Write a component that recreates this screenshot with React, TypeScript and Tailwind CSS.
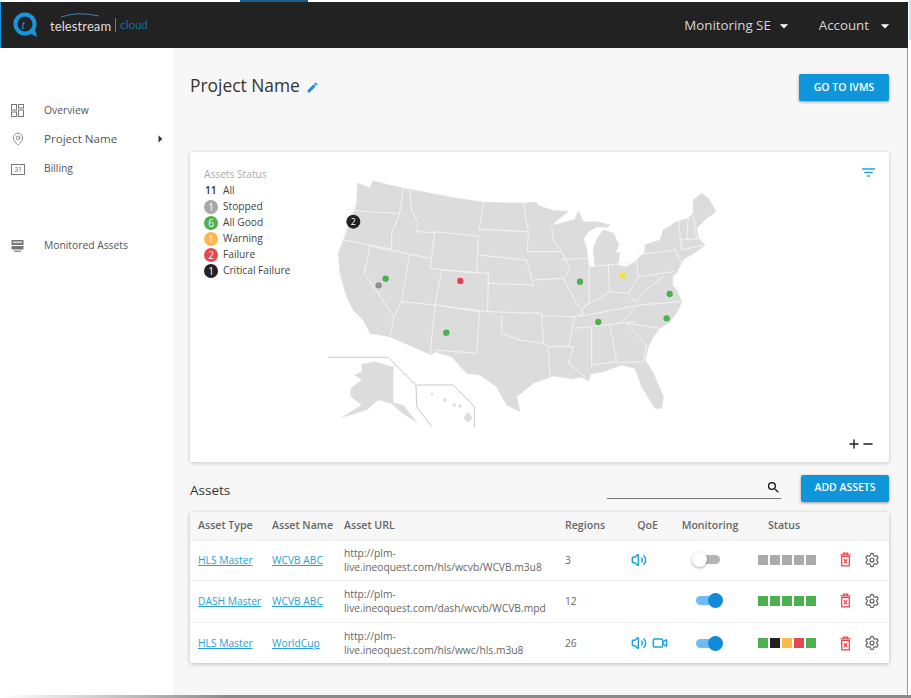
import { MdEdit, MdFilterList, MdSearch, MdArrowRight, MdArrowDropDown } from "react-icons/md";
import { Settings, Volume2, Video, MapPin, Plus, Minus } from "lucide-react";

const OUTLINE =
  "M113 40 L135 48 L150 55 L158 33 L250 55 L400 83 L490 97 L610 100 L650 97 L653 106 L700 122 L745 124 L715 148 L695 167 L740 155 L765 148 L775 124 L790 156 L830 155 L870 165 L862 172 L830 170 L805 185 L790 207 L800 235 L803 265 L808 288 L825 292 L823 268 L820 235 L832 205 L850 180 L880 190 L897 225 L885 250 L900 246 L895 280 L890 286 L920 290 L945 275 L975 245 L975 225 L1020 210 L1030 180 L1070 155 L1105 145 L1120 130 L1120 90 L1145 70 L1165 85 L1188 125 L1160 145 L1130 175 L1135 205 L1155 225 L1130 245 L1090 268 L1078 292 L1070 308 L1058 318 L1058 345 L1072 365 L1085 395 L1075 420 L1050 455 L1020 475 L1000 500 L985 530 L975 570 L1000 610 L1030 680 L1025 715 L1005 715 L965 650 L945 595 L905 585 L850 605 L812 612 L806 632 L785 622 L760 626 L700 618 L640 640 L590 680 L600 725 L560 705 L530 650 L480 615 L440 610 L395 560 L345 545 L335 555 L210 500 L150 490 L130 450 L100 420 L78 375 L60 310 L55 250 L72 205 L85 170 L110 100 Z";

const STATE_LINES = [
  "M85 118 L140 125 L240 130",
  "M250 58 L238 135 L215 190 L215 237",
  "M70 210 L215 237",
  "M150 228 L133 310 L222 440 L210 497",
  "M150 228 L330 265",
  "M268 255 L245 395 L222 440",
  "M270 60 L275 120 L295 160 L290 185 L345 188",
  "M345 185 L475 198 L470 310 L330 295 L345 185",
  "M490 97 L478 178",
  "M365 300 L505 310 L503 425 L345 405",
  "M365 300 L345 405 L330 555",
  "M245 395 L345 405 L478 425 L470 550 L345 540",
  "M478 178 L622 185",
  "M475 255 L620 270 L640 345 L505 340 L505 310",
  "M610 100 L625 185 L622 245 L725 245 L750 300 L730 325 L640 330",
  "M695 170 L700 210 L725 245",
  "M725 268 L805 265 L808 290 L808 395 L785 420",
  "M730 325 L770 400 L790 430 L765 440 L665 437",
  "M503 425 L665 430 L670 520 L600 510 L545 490 L545 435",
  "M670 520 L685 530 L690 620",
  "M685 530 L760 530 L745 580 L800 625",
  "M765 440 L745 530",
  "M808 290 L865 285 L868 365",
  "M865 285 L945 275",
  "M950 270 L955 320 L925 370 L870 365 L830 390 L790 410",
  "M775 440 L960 405 L1080 395",
  "M765 475 L945 455",
  "M950 410 L900 460",
  "M925 370 L945 395 L990 350 L1030 320",
  "M955 320 L1060 305",
  "M950 255 L1065 240 L1085 280",
  "M815 470 L815 590",
  "M870 465 L890 575 L815 585",
  "M920 460 L980 525 L970 575 L890 578",
  "M920 460 L1020 475",
  "M1075 150 L1085 240",
  "M1105 145 L1100 210",
  "M1120 135 L1130 208",
  "M1085 210 L1135 205",
  "M1085 240 L1150 225",
];

const MAP_DOTS = [
  { x: 197, y: 326, fill: "#4caf50" },
  { x: 176, y: 346, fill: "#8f8f8f" },
  { x: 421, y: 333, fill: "#e0404a" },
  { x: 379, y: 488, fill: "#4caf50" },
  { x: 780, y: 335, fill: "#4caf50" },
  { x: 909, y: 316, fill: "#f2e13c" },
  { x: 1049, y: 372, fill: "#4caf50" },
  { x: 1040, y: 445, fill: "#4caf50" },
  { x: 835, y: 456, fill: "#4caf50" },
];

const LEGEND = [
  { count: "1", label: "Stopped", color: "bg-[#a8a8a8]" },
  { count: "6", label: "All Good", color: "bg-[#4caf50]" },
  { count: "1", label: "Warning", color: "bg-[#ffb74d]" },
  { count: "2", label: "Failure", color: "bg-[#e5484d]" },
  { count: "1", label: "Critical Failure", color: "bg-[#222222]" },
];

const GRAY = "bg-[#aaaaaa]";
const GREEN = "bg-[#4caf50]";

const ASSETS = [
  {
    type: "HLS Master",
    name: "WCVB ABC",
    url: "live.ineoquest.com/hls/wcvb/WCVB.m3u8",
    regions: "3",
    audio: true,
    video: false,
    on: false,
    height: "h-[40px] pb-[2px]",
    status: [GRAY, GRAY, GRAY, GRAY, GRAY],
  },
  {
    type: "DASH Master",
    name: "WCVB ABC",
    url: "live.ineoquest.com/dash/wcvb/WCVB.mpd",
    regions: "12",
    audio: false,
    video: false,
    on: true,
    height: "h-[42px] pb-[2px]",
    status: [GREEN, GREEN, GREEN, GREEN, GREEN],
  },
  {
    type: "HLS Master",
    name: "WorldCup",
    url: "live.ineoquest.com/hls/wwc/hls.m3u8",
    regions: "26",
    audio: true,
    video: true,
    on: true,
    height: "h-[41px]",
    status: [GREEN, "bg-[#222222]", "bg-[#ffb74d]", "bg-[#e5484d]", GREEN],
  },
];

const COLS = "grid grid-cols-[74px_72px_221px_60px_45px_80px_72px_1fr] items-center pl-2";

const Logo = () => (
  <div className="flex items-center">
    <svg width="26" height="26" viewBox="0 0 26 26" className="mr-[11px]">
      <circle cx="12" cy="12" r="9.5" fill="none" stroke="#1497dc" strokeWidth="4" />
      <path d="M15 20 L24 25 L22 17 Z" fill="#1497dc" />
      <text x="8.5" y="17" fontSize="13" fill="#1497dc" fontFamily="Liberation Serif, serif" fontStyle="italic">
        t
      </text>
    </svg>
    <div className="relative">
      <span className="text-[13px] text-[#dedede] font-['Lato',sans-serif] tracking-[0.1px]">telestream</span>
      <svg width="40" height="6" viewBox="0 0 40 6" className="absolute left-[10px] top-[-1px]">
        <path d="M1 5 Q18 -1 39 4" fill="none" stroke="#4a9cc4" strokeWidth="0.8" />
      </svg>
    </div>
    <span className="mx-[4px] h-[14px] w-px bg-[#1497dc]" />
    <span className="text-[11.5px] text-[#176f9f] font-['Lato',sans-serif]">cloud</span>
  </div>
);

const TrashIcon = () => (
  <svg width="11" height="15" viewBox="0 0 13 17" fill="none" stroke="#e5484d" strokeWidth="1.5">
    <path d="M0.5 3 H12.5 M4 3 V1 H9 V3" />
    <rect x="2" y="5" width="9" height="11" />
    <path d="M4.5 8 L8.5 13 M8.5 8 L4.5 13" />
  </svg>
);

const Toggle = ({ on }: { on: boolean }) =>
  on ? (
    <div className="flex items-center justify-center">
      <div className="relative -ml-[6px] h-[9px] w-[22px] rounded-full bg-[#6ebcf5]">
        <div className="absolute -right-[5px] -top-[3px] h-[15px] w-[15px] rounded-full bg-[#0f8bd9]" />
      </div>
    </div>
  ) : (
    <div className="flex items-center justify-center pb-[1px]">
      <div className="relative h-[9px] w-[20px] rounded-full bg-[#b5b5b5]">
        <div className="absolute -left-[8px] -top-[3px] h-[15px] w-[15px] rounded-full bg-white shadow-[0_1px_3px_rgba(0,0,0,0.35)]" />
      </div>
    </div>
  );

export default function App() {
  return (
    <div className="relative flex h-[698px] w-[911px] flex-col overflow-hidden bg-white font-['Open_Sans',sans-serif] text-[#444444]">
      <div className="mx-[240px] h-[2px] w-[68px] shrink-0 bg-[#1c5f85]" />
      <header className="flex h-[46px] w-[908px] shrink-0 items-center justify-between border-l border-[#1497dc] bg-[#222222] pl-[12px] pr-[13px] text-[#d6d6d6]">
        <Logo />
        <div className="flex items-center pt-[2px] text-[13.3px]">
          <span>Monitoring SE</span>
          <MdArrowDropDown size={20} className="ml-[3px] text-white" />
          <span className="ml-[25px]">Account</span>
          <MdArrowDropDown size={20} className="ml-[6px] text-white" />
        </div>
      </header>
      <div className="flex h-[647px] w-[908px] shrink-0 border-r border-[#9a9a9a]">
        <aside className="w-[173px] shrink-0 bg-white pt-[48px] text-[#555555]">
          <div className="flex h-[29px] items-center text-[10.3px]">
            <svg width="13" height="13" viewBox="0 0 13 13" fill="none" stroke="#777777" className="ml-[11px] mr-[20px]">
              <rect x="0.5" y="0.5" width="5" height="5.5" />
              <rect x="7.5" y="0.5" width="5" height="3.5" />
              <rect x="0.5" y="8" width="5" height="4.5" />
              <rect x="7.5" y="6" width="5" height="6.5" />
            </svg>
            Overview
          </div>
          <div className="flex h-[29px] items-center pb-[2px] text-[11.6px]">
            <MapPin size={14} strokeWidth={1.4} className="ml-[11px] mr-[19px] text-[#777777]" />
            Project Name
            <MdArrowRight size={18} className="ml-auto mr-[4px] text-[#333333]" />
          </div>
          <div className="flex h-[29px] items-center text-[10.3px]">
            <svg width="14" height="12" viewBox="0 0 14 12" className="ml-[11px] mr-[19px]">
              <rect x="0.5" y="1.5" width="13" height="10" fill="none" stroke="#777777" />
              <text x="3.5" y="9" fontSize="6.5" fill="#666666" fontFamily="Open Sans, sans-serif">
                31
              </text>
            </svg>
            Billing
          </div>
          <div className="mt-[48px] flex h-[29px] items-center text-[10.3px]">
            <svg width="13" height="12" viewBox="0 0 13 12" className="ml-[11px] mr-[20px]">
              <rect x="0.5" y="0" width="12" height="5" fill="#777777" />
              <rect x="0.5" y="6" width="12" height="3.5" fill="#777777" />
              <rect x="2" y="1.5" width="9" height="1.5" fill="#dddddd" />
              <rect x="3" y="10.5" width="7" height="1.5" fill="#999999" />
            </svg>
            Monitored Assets
          </div>
        </aside>
        <main className="flex-1 bg-[#f7f7f7] px-[17px]">
          <div className="flex h-[104px] justify-between pr-[1px] pt-[26px]">
            <div className="flex items-start">
              <h1 className="text-[17.4px] leading-[22px] text-[#333333]">Project Name</h1>
              <MdEdit size={13} className="ml-[6px] mt-[7px] text-[#1f8fe0]" />
            </div>
            <button className="h-[27px] w-[90px] rounded-[2px] bg-[#0f95d9] text-[10.5px] font-semibold text-white shadow-[0_1px_3px_rgba(0,0,0,0.4)]">
              GO TO IVMS
            </button>
          </div>
          <section className="relative flex h-[310px] w-[699px] rounded-[2px] bg-white shadow-[0_1px_4px_rgba(0,0,0,0.2)]">
            <div className="w-[130px] shrink-0 pl-[14px] pt-[14px] text-[10.2px]">
              <div className="h-[16px] leading-[16px] text-[#aaaaaa]">Assets Status</div>
              <div className="mb-[1px] flex h-[16px] items-center leading-[16px]">
                <span className="w-[19px] pl-[1px] font-semibold text-[#333333]">11</span>
                All
              </div>
              {LEGEND.map((item) => (
                <div key={item.label} className="flex h-[16px] items-center whitespace-nowrap">
                  <span
                    className={`mr-[5px] flex h-[14px] w-[14px] items-center justify-center rounded-full text-[10px] text-white ${item.color}`}
                  >
                    {item.count}
                  </span>
                  {item.label}
                </div>
              ))}
            </div>
            <svg width="410" height="270" viewBox="0 0 1230 810" className="mt-[18px] shrink-0">
              <path d={OUTLINE} fill="#dcdcdc" stroke="#dcdcdc" strokeWidth="2" strokeLinejoin="round" />
              {STATE_LINES.map((d) => (
                <path key={d} d={d} fill="none" stroke="#f4f4f4" strokeWidth="3" strokeLinejoin="round" />
              ))}
              <path
                d="M125 582 L165 575 L220 590 L220 698 L250 705 L292 758 L250 732 L215 702 L175 690 L140 720 L60 745 L125 705 L92 680 L92 655 L125 630 L102 615 L125 605 Z"
                fill="#dcdcdc"
              />
              <path
                d="M25 562 H205 L288 645 L290 710 L335 770 M290 645 H400 L463 710 V770"
                fill="none"
                stroke="#c9c9c9"
                strokeWidth="3"
              />
              <path d="M430 745 L445 725 L458 745 L445 758 Z" fill="#dcdcdc" />
              <circle cx="336" cy="672" r="4" fill="#dcdcdc" />
              <circle cx="375" cy="690" r="5" fill="#dcdcdc" />
              <circle cx="403" cy="705" r="5" fill="#dcdcdc" />
              <circle cx="420" cy="708" r="5" fill="#dcdcdc" />
              {MAP_DOTS.map((dot) => (
                <circle key={`${dot.x}-${dot.y}`} cx={dot.x} cy={dot.y} r="9.5" fill={dot.fill} />
              ))}
              <circle cx="100" cy="155" r="21" fill="#222222" />
              <text x="100" y="164" textAnchor="middle" fontSize="26" fill="#ffffff" fontFamily="Open Sans, sans-serif">
                2
              </text>
            </svg>
            <MdFilterList size={17} className="absolute right-[12px] top-[12px] text-[#1ba3dc]" />
            <div className="absolute bottom-[11px] right-[14px] flex text-[#222222]">
              <Plus size={14} strokeWidth={2.5} />
              <Minus size={14} strokeWidth={2.5} />
            </div>
          </section>
          <div className="flex h-[50px] items-center justify-between pr-[1px] pt-[2px]">
            <h2 className="mt-[4px] text-[13.5px] text-[#333333]">Assets</h2>
            <div className="flex items-center">
              <div className="mb-[1px] flex h-[23px] w-[174px] items-center justify-end border-b border-[#777777]">
                <MdSearch size={15} className="text-[#111111]" />
              </div>
              <button className="ml-[20px] h-[27px] w-[88px] rounded-[2px] bg-[#0f95d9] text-[10.5px] font-semibold text-white shadow-[0_1px_3px_rgba(0,0,0,0.4)]">
                ADD ASSETS
              </button>
            </div>
          </div>
          <section className="w-[699px] rounded-[2px] bg-white shadow-[0_1px_4px_rgba(0,0,0,0.25)]">
            <div className={`${COLS} h-[28px] bg-[#f7f7f7] pb-[1px] text-[10.6px] font-semibold text-[#666666]`}>
              <span>Asset Type</span>
              <span>Asset Name</span>
              <span>Asset URL</span>
              <span>Regions</span>
              <span className="text-center">QoE</span>
              <span className="text-center">Monitoring</span>
              <span className="pr-[4px] text-center">Status</span>
              <span />
            </div>
            {ASSETS.map((asset) => (
              <div
                key={asset.type + asset.name}
                className={`${COLS} ${asset.height} border-t border-[#eeeeee] text-[10.25px] leading-[14px] text-[#666666]`}
              >
                <a className="whitespace-nowrap text-[#2a9fd8] underline">{asset.type}</a>
                <a className="whitespace-nowrap text-[#2a9fd8] underline">{asset.name}</a>
                <span className="whitespace-nowrap">
                  http://plm-
                  <br />
                  {asset.url}
                </span>
                <span>{asset.regions}</span>
                <div className="-ml-[1px] flex items-center pl-[7px] text-[#1ba3e0]">
                  <span className="w-[21px]">{asset.audio && <Volume2 size={16} strokeWidth={2.2} />}</span>
                  {asset.video && <Video size={16} strokeWidth={2.2} />}
                </div>
                <Toggle on={asset.on} />
                <div className="flex gap-[2px] pl-[8px]">
                  {asset.status.map((color, j) => (
                    <span key={j} className={`h-[10px] w-[10px] ${color}`} />
                  ))}
                </div>
                <div className="flex items-center gap-[13px] pl-[18px]">
                  <TrashIcon />
                  <Settings size={16} strokeWidth={1.7} className="text-[#555555]" />
                </div>
              </div>
            ))}
          </section>
        </main>
      </div>
      <div className="h-[3px] shrink-0 bg-[linear-gradient(90deg,#ffffff,#8c8c8c_25%)]" />
      <div className="absolute right-0 top-0 h-[40px] w-[2px] bg-[#cfe6f2]" />
    </div>
  );
}
